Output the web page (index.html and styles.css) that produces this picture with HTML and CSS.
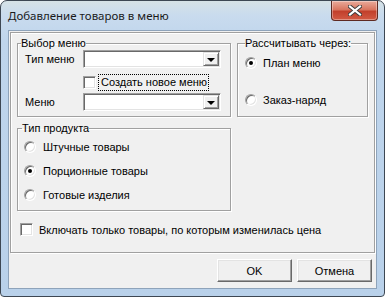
FILE: index.html
```html
<!DOCTYPE html>
<html lang="ru">
<head>
    <meta charset="UTF-8">
    <title>Добавление товаров в меню</title>
    <link rel="stylesheet" href="styles.css">
</head>
<body>
    <div class="window">
        <div class="titlebar">
            <span class="title">Добавление товаров в меню</span>
            <div class="close-btn">
                <svg width="14" height="11" viewBox="0 0 14 11">
                    <path d="M2 1.5 L12 9.5 M12 1.5 L2 9.5" stroke="#3b3b3b" stroke-width="4" stroke-linecap="square"/>
                    <path d="M2 1.5 L12 9.5 M12 1.5 L2 9.5" stroke="#fff" stroke-width="2.2" stroke-linecap="square"/>
                </svg>
            </div>
        </div>
        <div class="client">
            <div class="panel">
                <div class="top-row">
                    <fieldset class="group group-menu">
                        <legend>Выбор меню</legend>
                        <div class="field-row first">
                            <span class="field-label">Тип меню</span>
                            <div class="combo"><span class="combo-btn"><span class="arrow"></span></span></div>
                        </div>
                        <div class="new-menu">
                            <span class="checkbox"></span>
                            <span class="focus-label">Создать новое меню</span>
                        </div>
                        <div class="field-row">
                            <span class="field-label">Меню</span>
                            <div class="combo"><span class="combo-btn"><span class="arrow"></span></span></div>
                        </div>
                    </fieldset>
                    <fieldset class="group group-calc">
                        <legend>Рассчитывать через:</legend>
                        <div class="radio-row"><span class="radio checked"></span>План меню</div>
                        <div class="radio-row"><span class="radio"></span>Заказ-наряд</div>
                    </fieldset>
                </div>
                <fieldset class="group group-product">
                    <legend>Тип продукта</legend>
                    <div class="radio-row"><span class="radio"></span>Штучные товары</div>
                    <div class="radio-row"><span class="radio checked"></span>Порционные товары</div>
                    <div class="radio-row"><span class="radio"></span>Готовые изделия</div>
                </fieldset>
                <div class="price-only">
                    <span class="checkbox"></span>
                    <span>Включать только товары, по которым изменилась цена</span>
                </div>
            </div>
            <div class="buttons">
                <button class="btn">OK</button>
                <button class="btn">Отмена</button>
            </div>
        </div>
    </div>
</body>
</html>
```

FILE: styles.css
```css
* {
    box-sizing: border-box;
}

body {
    margin: 0;
    width: 385px;
    height: 297px;
    overflow: hidden;
    background: #fff;
    font-family: "Liberation Sans", Arial, sans-serif;
    font-size: 11px;
    color: #000;
}

.window {
    width: 385px;
    height: 297px;
    display: flex;
    flex-direction: column;
    padding: 0 7px 7px 7px;
    border: 1px solid #3d4753;
    border-radius: 7px 7px 4px 4px;
    background: linear-gradient(#d6e2e6, #c9dbee 14px, #bfd5ec 40px, #b9d1ea);
}

.titlebar {
    height: 29px;
    display: flex;
    justify-content: space-between;
}

.title {
    align-self: center;
    font-family: "Noto Sans", sans-serif;
    font-size: 11.5px;
    color: #1b1b1b;
    margin-top: -1px;
}

.close-btn {
    width: 47px;
    height: 20px;
    margin-right: -1px;
    display: flex;
    align-items: center;
    justify-content: center;
    border: 1px solid #5e2a22;
    border-top: none;
    border-radius: 0 0 4px 4px;
    background: linear-gradient(#e9ab9b, #d97660 45%, #c2402c 55%, #d25a44);
    box-shadow: inset 0 0 0 1px rgba(255, 255, 255, 0.35);
}

.client {
    flex: 1;
    background: #f0f0f0;
    border: 1px solid #8ea3ba;
}

.panel {
    height: 221px;
    margin: 1px 1px 0 1px;
    padding: 4px 0 0 6px;
    border: 1px solid #a0a0a0;
    box-shadow: inset 1px 1px #fff, 1px 1px #fff;
}

.top-row {
    display: flex;
    gap: 6px;
}

.group {
    margin: 0;
    padding: 0;
    min-width: 0;
    border: 1px solid #a0a0a0;
    box-shadow: inset 1px 1px #fff, 1px 1px #fff;
}

.group legend {
    padding: 0;
    margin-left: 3px;
    line-height: 13px;
}

.group-menu {
    width: 214px;
    height: 80px;
}

.group-calc {
    width: 131px;
    height: 80px;
}

.group-calc legend {
    margin-left: 7px;
}

.group-product {
    width: 214px;
    height: 89px;
    margin-top: 5px;
}

.group-product legend {
    margin-left: 4px;
}

.field-row {
    display: flex;
    align-items: center;
    padding-left: 7px;
    margin-top: 3px;
}

.field-row.first {
    margin-top: 0;
}

.field-label {
    width: 58px;
}

.combo {
    position: relative;
    width: 138px;
    height: 18px;
    background: #fff;
    border: 1px solid;
    border-color: #a0a0a0 #fff #fff #a0a0a0;
    box-shadow: inset 1px 1px #696969, inset -1px -1px #e3e3e3;
}

.combo-btn {
    position: absolute;
    top: 1px;
    right: 1px;
    bottom: 1px;
    width: 16px;
    display: flex;
    align-items: center;
    justify-content: center;
    background: #f0f0f0;
    border: 1px solid;
    border-color: #e3e3e3 #696969 #696969 #e3e3e3;
    box-shadow: inset 1px 1px #fff, inset -1px -1px #a0a0a0;
}

.arrow {
    width: 0;
    height: 0;
    border-left: 4px solid transparent;
    border-right: 4px solid transparent;
    border-top: 4px solid #000;
    margin-top: 1px;
}

.new-menu {
    display: flex;
    align-items: center;
    height: 16px;
    margin-top: 6px;
    padding-left: 65px;
}

.checkbox {
    width: 13px;
    height: 13px;
    flex: none;
    background: #fff;
    border: 1px solid;
    border-color: #a0a0a0 #fff #fff #a0a0a0;
    box-shadow: inset 1px 1px #696969, inset -1px -1px #e3e3e3;
}

.focus-label {
    margin-left: 3px;
    padding: 1px 1px 1px 2px;
    line-height: 13px;
    outline: 1px dotted #000;
}

.radio-row {
    display: flex;
    align-items: center;
    height: 14px;
}

.radio {
    position: relative;
    width: 12px;
    height: 12px;
    flex: none;
    border-radius: 50%;
    background: #fff;
    border: 1px solid;
    border-color: #a0a0a0 #fff #fff #a0a0a0;
    box-shadow: inset 1px 1px #696969, inset -1px -1px #e3e3e3;
}

.radio.checked::after {
    content: "";
    position: absolute;
    left: 3px;
    top: 3px;
    width: 4px;
    height: 4px;
    border-radius: 50%;
    background: #000;
}

.group-calc .radio-row {
    padding-left: 7px;
    gap: 6px;
    margin-top: 23px;
}

.group-calc .radio-row:first-of-type {
    margin-top: 6px;
}

.group-product .radio-row {
    padding-left: 6px;
    gap: 7px;
    margin-top: 10px;
}

.group-product .radio-row:first-of-type {
    margin-top: 5px;
}

.price-only {
    display: flex;
    align-items: center;
    gap: 6px;
    margin: 12px 0 0 3px;
}

.buttons {
    display: flex;
    justify-content: flex-end;
    gap: 5px;
    margin-top: 6px;
    padding-right: 4px;
}

.btn {
    width: 75px;
    height: 23px;
    padding: 0;
    font-family: "Liberation Sans", Arial, sans-serif;
    font-size: 11px;
    color: #000;
    background: #f0f0f0;
    border: 1px solid;
    border-color: #fff #696969 #696969 #fff;
    box-shadow: inset -1px -1px #a0a0a0, inset 1px 1px #e3e3e3;
}
```
